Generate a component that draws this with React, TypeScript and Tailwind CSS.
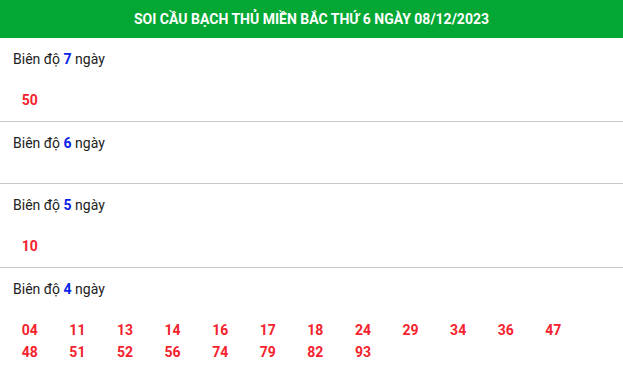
import React from "react"

type Section = { days: number; numbers: string[] }

const sections: Section[] = [
  { days: 7, numbers: ["50"] },
  { days: 6, numbers: [] },
  { days: 5, numbers: ["10"] },
  {
    days: 4,
    numbers: ["04", "11", "13", "14", "16", "17", "18", "24", "29", "34", "36", "47", "48", "51", "52", "56", "74", "79", "82", "93"],
  },
]

export default function App() {
  return (
    <div className="w-[623px] bg-white font-['Roboto',_'Liberation_Sans',_sans-serif]">
      <div className="flex h-[38px] items-center justify-center bg-[#03a834] text-[14px] font-bold text-white">
        SOI CẦU BẠCH THỦ MIỀN BẮC THỨ 6 NGÀY 08/12/2023
      </div>
      {sections.map((s, i) => (
        <div
          key={s.days}
          className={`px-[13px] pt-[11px] pb-[10px] ${i < sections.length - 1 ? "border-b border-[#c8c8c8]" : ""}`}
        >
          <div className="h-[20px] text-[14px] leading-[20px] text-[#222]">
            Biên độ <span className="font-bold text-[#0a23e6]">{s.days}</span> ngày
          </div>
          <div className="mt-[20px] -ml-[7px] flex flex-wrap">
            {s.numbers.map((n) => (
              <span
                key={n}
                className="w-[47.6px] text-center text-[14px] font-bold leading-[22px] text-[#f5222d]"
              >
                {n}
              </span>
            ))}
          </div>
        </div>
      ))}
    </div>
  )
}
